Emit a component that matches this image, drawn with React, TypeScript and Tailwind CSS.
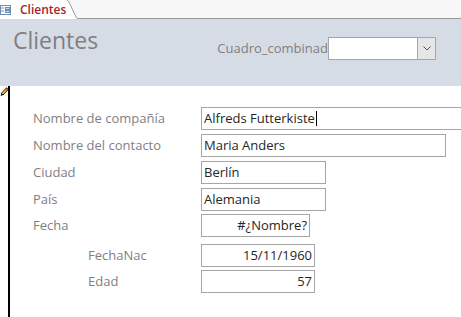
import React from 'react'

const font = { fontFamily: '"Open Sans", "Noto Sans", "Liberation Sans", sans-serif' }

function TabIcon() {
  return (
    <svg width="11" height="10" viewBox="0 0 11 10" className="shrink-0">
      <rect x="0.5" y="0.5" width="10" height="9" fill="#fff" stroke="#6d8fb8" />
      <line x1="1" y1="3" x2="4" y2="3" stroke="#6d8fb8" />
      <line x1="1" y1="6" x2="4" y2="6" stroke="#6d8fb8" />
      <rect x="5.5" y="2.5" width="4" height="2" fill="#cfdcec" stroke="#6d8fb8" />
      <rect x="5.5" y="5.5" width="4" height="2" fill="#cfdcec" stroke="#6d8fb8" />
    </svg>
  )
}

function Pencil() {
  return (
    <svg width="9" height="10" viewBox="0 0 9 10" className="absolute left-0 top-[1px]">
      <path d="M6.5 0.8 L8.2 2.4 L3 8 L1.3 6.4 Z" fill="#f5c518" stroke="#000" strokeWidth="0.9" />
      <path d="M6.5 0.8 L8.2 2.4 L7.2 3.4 L5.5 1.9 Z" fill="#e0342d" />
      <path d="M1.3 6.4 L3 8 L0.6 9 Z" fill="#000" />
    </svg>
  )
}

function Field({ value, w, align = 'left', caret = false }: { value: string; w: string; align?: 'left' | 'right'; caret?: boolean }) {
  return (
    <div className={`${w} h-[23px] border border-[#a6a6a6] bg-white flex items-center px-[2px] text-[13px] text-[#262626] ${align === 'right' ? 'justify-end' : ''}`}>
      <span className="leading-none whitespace-nowrap">{value}</span>
      {caret && <span className="ml-[1px] w-px h-[15px] bg-black" />}
    </div>
  )
}

function Row({ label, children, indent = false, mt }: { label: string; children: React.ReactNode; indent?: boolean; mt: string }) {
  return (
    <div className={`flex items-center ${mt}`}>
      <div className={`w-[191px] shrink-0 text-[13px] text-[#7f7f7f] leading-none ${indent ? 'pl-[78px]' : 'pl-[23px]'}`}>{label}</div>
      {children}
    </div>
  )
}

export default function App() {
  return (
    <div className="w-[461px] h-[317px] overflow-hidden bg-white flex flex-col" style={font}>
      {/* tab strip */}
      <div className="h-[19px] bg-[#f7f7f7] flex items-stretch relative shrink-0">
        <div className="bg-white flex items-center gap-[9px] pl-0 w-[66px]">
          <TabIcon />
          <span className="text-[12px] font-semibold text-[#a4262c] leading-none">Clientes</span>
        </div>
        <svg width="12" height="19" viewBox="0 0 12 19" className="shrink-0">
          <path d="M0 0 L1 0 Q2 0 3 2 L10 17 Q10.5 18 12 18 L12 19 L0 19 Z" fill="#fff" />
          <path d="M0.5 0 Q2 0 3 2 L10 17 Q10.5 18.5 12 18.5" fill="none" stroke="#9a9a9a" />
        </svg>
        <div className="flex-1 border-b border-[#9a9a9a]" />
      </div>

      {/* form header */}
      <div className="h-[67px] bg-[#d6dce5] flex items-start shrink-0">
        <div className="pl-[13px] pt-[6px] text-[23px] text-[#7f7f7f] leading-[30px]">Clientes</div>
        <div className="ml-auto mr-[25px] mt-[18px] flex items-center">
          <span className="text-[13px] text-[#7f7f7f] leading-none whitespace-nowrap">Cuadro_combinad</span>
          <div className="w-[108px] h-[23px] border border-[#a6a6a6] bg-white flex justify-end">
            <div className="w-[18px] h-full bg-[#e6e6e6] border-l border-[#a6a6a6] flex items-center justify-center">
              <svg width="8" height="5" viewBox="0 0 8 5">
                <path d="M0.5 0.5 L4 4 L7.5 0.5" fill="none" stroke="#555" strokeWidth="1" />
              </svg>
            </div>
          </div>
        </div>
      </div>

      {/* detail */}
      <div className="flex-1 relative pl-[8px]">
        <Pencil />
        <div className="h-full border-l-2 border-black pt-[21px]">
          <Row label="Nombre de compañía" mt="mt-0">
            <div className="w-[270px] shrink-0">
              <Field value="Alfreds Futterkiste" w="w-full" caret />
            </div>
          </Row>
          <Row label="Nombre del contacto" mt="mt-[4px]">
            <Field value="Maria Anders" w="w-[245px]" />
          </Row>
          <Row label="Ciudad" mt="mt-[4px]">
            <Field value="Berlín" w="w-[125px]" />
          </Row>
          <Row label="País" mt="mt-[4px]">
            <Field value="Alemania" w="w-[125px]" />
          </Row>
          <Row label="Fecha" mt="mt-[3px]">
            <Field value="#¿Nombre?" w="w-[109px]" align="right" />
          </Row>
          <Row label="FechaNac" indent mt="mt-[7px]">
            <Field value="15/11/1960" w="w-[114px]" align="right" />
          </Row>
          <Row label="Edad" indent mt="mt-[3px]">
            <Field value="57" w="w-[114px]" align="right" />
          </Row>
        </div>
      </div>
    </div>
  )
}
